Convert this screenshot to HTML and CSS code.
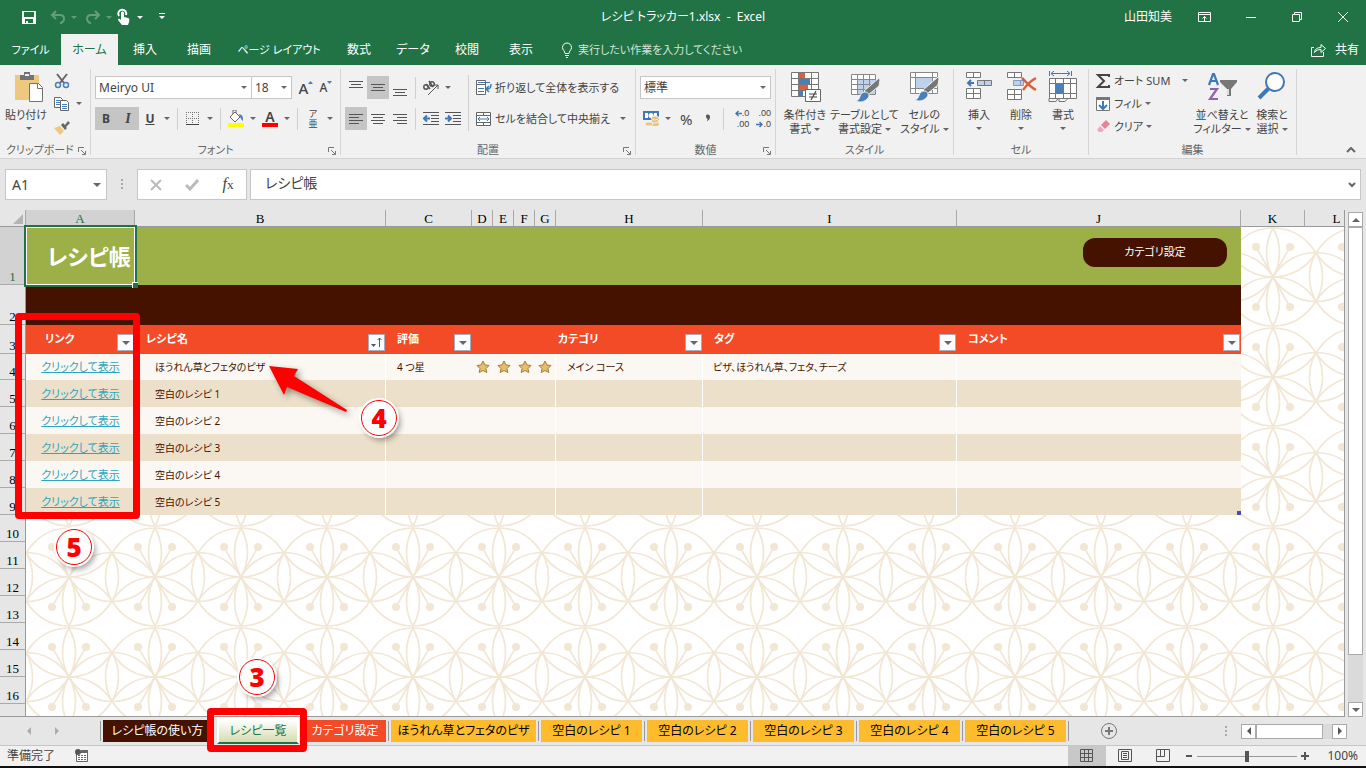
FILE: index.html
```html
<!DOCTYPE html>
<html lang="ja">
<head>
  <meta charset="UTF-8">
  <title>レシピ トラッカー1.xlsx - Excel</title>
  <meta name="viewport" content="width=device-width, initial-scale=1.0">
  <link rel="stylesheet" href="styles.css">
</head>
<body>

  <!-- Title bar -->
  <header class="titlebar">
    <div class="quick">
      <button class="qbtn" aria-label="上書き保存"><svg width="16" height="16" viewBox="0 0 16 16"><path fill="#fff" fill-rule="evenodd" d="M1 2h14v13H1zM3 3v5h10V3zM4 10v4h1v-2h2v2h5v-4z"/></svg></button>
      <button class="qbtn dim" aria-label="元に戻す"><svg width="16" height="16" viewBox="0 0 16 16" fill="none" stroke="#fff" stroke-width="2"><path d="M6 2 2 6l4 4M2 6h8c3 0 4 2 4 4s-2 4-4 4"/></svg><i class="caret"></i></button>
      <button class="qbtn dim" aria-label="やり直し"><svg width="16" height="16" viewBox="0 0 16 16" fill="none" stroke="#fff" stroke-width="2"><path d="m10 2 4 4-4 4M14 6H6C3 6 2 8 2 10s2 4 4 4"/></svg><i class="caret"></i></button>
      <button class="qbtn touch" aria-label="タッチ/マウス モードの切り替え"><svg width="16" height="18" viewBox="0 0 16 18"><path fill="none" stroke="#fff" stroke-width="2" d="M3 8A4 4 0 1 1 10 7"/><path fill="#fff" d="M5 5c0-2 3-2 3 0v4l4 1c1 0 2 1 1 4l-1 3H6L2 12c0-2 2-1 3 0z"/></svg><i class="caret"></i></button>
      <button class="qbtn" aria-label="クイック アクセス ツール バーのカスタマイズ"><svg width="8" height="8" viewBox="0 0 8 8" fill="#fff"><path d="M1 0h6v1H1zM1 3h6L4 6z"/></svg></button>
    </div>
    <div class="doc-title">レシピ トラッカー1.xlsx&nbsp; -&nbsp; Excel</div>
    <div class="window">
      <span class="user">山田知美</span>
      <button aria-label="リボンの表示オプション"><svg width="14" height="12" viewBox="0 0 14 12" fill="none" stroke="#fff"><path d="M.5 1.500h12v9H.5zM.5 3.500h12M6.500 10V5.500M4.500 7.500l2-2 2 2"/></svg></button>
      <button aria-label="最小化"><svg width="12" height="12" viewBox="0 0 12 12" stroke="#fff"><path d="M1 6.500h10"/></svg></button>
      <button aria-label="元に戻す (縮小)"><svg width="12" height="12" viewBox="0 0 12 12" fill="none" stroke="#fff"><path d="M1.500 3.500h7v7h-7zM3.500 3.500v-2h7v7h-2"/></svg></button>
      <button aria-label="閉じる"><svg width="12" height="12" viewBox="0 0 12 12" stroke="#fff"><path d="m1 1 10 10M11 1 1 11"/></svg></button>
    </div>
  </header>

  <!-- Ribbon tabs -->
  <nav class="tabs">
    <button class="tab tab-file">ファイル</button>
    <button class="tab tab-home active">ホーム</button>
    <button class="tab">挿入</button>
    <button class="tab">描画</button>
    <button class="tab tab-wide">ページ レイアウト</button>
    <button class="tab">数式</button>
    <button class="tab">データ</button>
    <button class="tab">校閲</button>
    <button class="tab">表示</button>
    <label class="tell-me">
      <svg width="12" height="16" viewBox="0 0 12 16" fill="none" stroke="#fff"><path d="M4 11.500C4 9 1.500 8 1.500 5.500a4.500 4.500 0 0 1 9 0C10.500 8 8 9 8 11.500zM4 13.500h4M5 15.500h2"/></svg>
      <input type="text" aria-label="操作アシスト" placeholder="実行したい作業を入力してください">
    </label>
    <button class="share"><svg width="16" height="14" viewBox="0 0 16 14" fill="none" stroke="#fff"><path d="M3 4.500H.5v9h12V9M3.500 9.500C4 6 6 4.500 10 4.500V1.500l4.500 4-4.500 4v-3C7 6.500 5 7.500 3.500 9.500z"/></svg>共有</button>
  </nav>

  <!-- Ribbon -->
  <section class="ribbon">
    <div class="group g-clip">
      <div class="group-body">
        <button class="big">
          <svg width="30" height="32" viewBox="0 0 30 32"><path fill="#edc87e" d="M1 4h24v25H1z"/><path fill="#737373" d="M6 4h4V1h6v3h4v5H6z"/><path fill="#f1f1f1" d="M11 3h4v2h-4z"/><path fill="#fff" stroke="#737373" d="M15.500 12.500h9l4 4v14h-13z"/><path fill="none" stroke="#737373" d="M23.500 12.500v5h5"/></svg>
          <span>貼り付け</span><i class="caret"></i>
        </button>
        <div class="stack">
          <button class="tool" aria-label="切り取り"><svg width="16" height="16" viewBox="0 0 16 16" fill="none"><path stroke="#666" stroke-width="2" d="m3 1 7 9M13 1 6 10"/><circle cx="4" cy="12" r="2.500" stroke="#4a7fb8" stroke-width="1.500"/><circle cx="12" cy="12" r="2.500" stroke="#4a7fb8" stroke-width="1.500"/></svg></button>
          <button class="tool" aria-label="コピー"><svg width="16" height="16" viewBox="0 0 16 16"><path fill="#fff" stroke="#666" d="M.5 1.500h6l2 2v8h-8z"/><path stroke="#4a7fb8" d="M2 4.500h4M2 6.500h4M2 8.500h4"/><path fill="#fff" stroke="#666" d="M6.500 4.500h6l2 2v8h-8z"/><path stroke="#4a7fb8" d="M8 8.500h5M8 10.500h5M8 12.500h5"/></svg><i class="caret"></i></button>
          <button class="tool" aria-label="書式のコピー/貼り付け"><svg width="16" height="16" viewBox="0 0 16 16"><path fill="#edc87e" d="m0 9 6-2 4 5-4 4z"/><path fill="#666" d="m7 6 2-2 2 2 3-4 2 2-4 4 1 1-2 2z"/></svg></button>
        </div>
      </div>
      <div class="group-name">クリップボード<svg class="launch" width="8" height="8" viewBox="0 0 8 8"><path fill="none" stroke="#777" d="M.5 5V.5H6M3 3l4 4M7.500 4v3.500H4"/></svg></div>
    </div>

    <div class="group g-font">
      <div class="group-body rows">
        <div class="row">
          <span class="combo combo-font"><select aria-label="フォント"><option>Meiryo UI</option></select><i class="caret"></i></span>
          <span class="combo combo-size"><select aria-label="フォント サイズ"><option>18</option></select><i class="caret"></i></span>
          <button class="tool grow" aria-label="フォント サイズの拡大">A<svg width="5" height="4" viewBox="0 0 5 4"><path fill="#4a7fb8" d="m0 3 2.500-3L5 3z"/></svg></button>
          <button class="tool grow shrink" aria-label="フォント サイズの縮小">A<svg width="5" height="4" viewBox="0 0 5 4"><path fill="#4a7fb8" d="m0 0 2.500 3L5 0z"/></svg></button>
        </div>
        <div class="row">
          <button class="tool on bold">B</button>
          <button class="tool on italic">I</button>
          <button class="tool underline">U</button>
          <button class="drop" aria-label="下線の種類"><i class="caret"></i></button>
          <span class="sep"></span>
          <button class="tool" aria-label="罫線"><svg width="14" height="14" viewBox="0 0 14 14" fill="none" stroke="#777"><path stroke-dasharray="1 1" d="M.5 0v12M6.500 0v12M12.500 0v12M0 .5h13M0 6.500h13"/><path stroke="#444" d="M0 12.500h13"/></svg></button>
          <button class="drop" aria-label="罫線の種類"><i class="caret"></i></button>
          <span class="sep"></span>
          <button class="tool" aria-label="塗りつぶしの色"><svg width="18" height="17" viewBox="0 0 18 17"><path fill="#fff" stroke="#666" d="m3 7 5-5 5 5-5 5zM6 4V0h3v3"/><path fill="#4a7fb8" d="M12 4c4 1 4 3 4 7-2-1-2-3-3-4z"/><path fill="#ff0" d="M1 13h16v4H1z"/></svg></button>
          <button class="drop" aria-label="塗りつぶしの色の選択"><i class="caret"></i></button>
          <button class="tool color">A</button>
          <button class="drop" aria-label="フォントの色の選択"><i class="caret"></i></button>
          <span class="sep"></span>
          <button class="tool ruby"><span>ア</span><span>亜</span></button>
          <button class="drop" aria-label="ふりがなの設定"><i class="caret"></i></button>
        </div>
      </div>
      <div class="group-name">フォント<svg class="launch" width="8" height="8" viewBox="0 0 8 8"><path fill="none" stroke="#777" d="M.5 5V.5H6M3 3l4 4M7.500 4v3.500H4"/></svg></div>
    </div>

    <div class="group g-align">
      <div class="group-body">
        <div class="rows">
          <div class="row">
            <button class="tool" aria-label="上揃え"><svg width="14" height="16" viewBox="0 0 14 16" stroke="#555"><path d="M0 1.500h14M2 4.500h10M0 7.500h14"/></svg></button>
            <button class="tool on" aria-label="上下中央揃え"><svg width="14" height="16" viewBox="0 0 14 16" stroke="#555"><path d="M0 4.500h14M2 7.500h10M0 10.500h14"/></svg></button>
            <button class="tool" aria-label="下揃え"><svg width="14" height="16" viewBox="0 0 14 16" stroke="#555"><path d="M0 9.500h14M2 12.500h10M0 15.500h14"/></svg></button>
            <span class="sep"></span>
            <button class="tool" aria-label="方向"><svg width="18" height="16" viewBox="0 0 18 16" fill="none" stroke="#555"><circle cx="4" cy="7" r="2.200" stroke-width="1.500"/><path stroke-width="1.500" d="m4 4 4 5M7 1l4 6"/><circle cx="10" cy="4" r="2.200" stroke-width="1.500"/><path d="m6 15 10-10M12 5h4v4"/></svg></button>
            <button class="drop" aria-label="方向の選択"><i class="caret"></i></button>
          </div>
          <div class="row">
            <button class="tool on" aria-label="左揃え"><svg width="14" height="14" viewBox="0 0 14 14" stroke="#555"><path d="M0 2.500h14M0 5.500h10M0 8.500h14M0 11.500h10"/></svg></button>
            <button class="tool" aria-label="中央揃え"><svg width="14" height="14" viewBox="0 0 14 14" stroke="#555"><path d="M0 2.500h14M2 5.500h10M0 8.500h14M2 11.500h10"/></svg></button>
            <button class="tool" aria-label="右揃え"><svg width="14" height="14" viewBox="0 0 14 14" stroke="#555"><path d="M0 2.500h14M4 5.500h10M0 8.500h14M4 11.500h10"/></svg></button>
            <span class="sep"></span>
            <button class="tool" aria-label="インデントを減らす"><svg width="16" height="14" viewBox="0 0 16 14" stroke="#555"><path d="M0 .5h16M8 3.500h8M8 6.500h8M8 9.500h8M0 12.500h16"/><path fill="none" stroke="#3f78b5" stroke-width="2" d="M7 6.500H1M4 3.500l-3 3 3 3"/></svg></button>
            <button class="tool" aria-label="インデントを増やす"><svg width="16" height="14" viewBox="0 0 16 14" stroke="#555"><path d="M0 .5h16M8 3.500h8M8 6.500h8M8 9.500h8M0 12.500h16"/><path fill="none" stroke="#3f78b5" stroke-width="2" d="M0 6.500h6M3 3.500l3 3-3 3"/></svg></button>
          </div>
        </div>
        <span class="sep tall"></span>
        <div class="rows">
          <button class="wide"><svg width="16" height="16" viewBox="0 0 16 16" fill="none"><path fill="#fff" stroke="#666" d="M.5.500h9v4h-9zM.5 4.500h9v10h-9z"/><path stroke="#3f78b5" d="M2 2.500h12M2 8.500h6M2 11.500h6"/><path stroke="#3f78b5" stroke-width="1.500" d="M15 4c0 4-1 5-4 5M13 6l-3 3 3 3"/></svg>折り返して全体を表示する</button>
          <button class="wide"><svg width="16" height="16" viewBox="0 0 16 16" fill="none"><path fill="#fff" stroke="#666" d="M.5 1.500h14v13H.5zM.5 4.500h14M.5 11.500h14M7.500 1.500v3M7.500 11.500v3"/><path stroke="#3f78b5" d="M2 8h11M4 6 2 8l2 2M11 6l2 2-2 2"/></svg>セルを結合して中央揃え<i class="caret"></i></button>
        </div>
      </div>
      <div class="group-name">配置<svg class="launch" width="8" height="8" viewBox="0 0 8 8"><path fill="none" stroke="#777" d="M.5 5V.5H6M3 3l4 4M7.500 4v3.500H4"/></svg></div>
    </div>

    <div class="group g-num">
      <div class="group-body rows">
        <div class="row">
          <span class="combo combo-num"><select aria-label="数値の書式"><option>標準</option></select><i class="caret"></i></span>
        </div>
        <div class="row">
          <button class="tool" aria-label="通貨表示形式"><svg width="18" height="17" viewBox="0 0 18 17"><path fill="#3f78b5" d="M1 1h16v9H1z"/><path fill="#fff" d="M3 3h3v5H3zM12 3h3v3h-3z"/><circle cx="9" cy="5.500" r="2.500" fill="#fff"/><ellipse cx="13" cy="14" rx="4" ry="2" fill="#edc072"/><ellipse cx="13" cy="11" rx="4" ry="2" fill="#edc072" stroke="#f1f1f1"/><ellipse cx="13" cy="8" rx="4" ry="2" fill="#edc072" stroke="#f1f1f1"/><ellipse cx="7" cy="14" rx="4" ry="2" fill="#edc072" stroke="#f1f1f1"/></svg></button>
          <button class="drop" aria-label="通貨の選択"><i class="caret"></i></button>
          <button class="tool percent">%</button>
          <button class="tool" aria-label="桁区切りスタイル"><svg width="6" height="14" viewBox="0 0 6 14"><path fill="#555" d="M1 4c0-2 4-2 4 1 0 2-1 3-3 4V8l1-1C2 7 1 6 1 4z"/></svg></button>
          <span class="sep"></span>
          <button class="tool dec"><span><svg width="7" height="7" viewBox="0 0 7 7" fill="none" stroke="#3f78b5" stroke-width="1.500"><path d="M7 3.500H1M3.500 1 1 3.500 3.500 6"/></svg>.0</span><span>.00</span></button>
          <button class="tool dec"><span>.00</span><span><svg width="7" height="7" viewBox="0 0 7 7" fill="none" stroke="#3f78b5" stroke-width="1.500"><path d="M0 3.500h6M3.500 1 6 3.500 3.500 6"/></svg>.0</span></button>
        </div>
      </div>
      <div class="group-name">数値<svg class="launch" width="8" height="8" viewBox="0 0 8 8"><path fill="none" stroke="#777" d="M.5 5V.5H6M3 3l4 4M7.500 4v3.500H4"/></svg></div>
    </div>

    <div class="group g-style">
      <div class="group-body">
        <button class="big">
          <svg width="32" height="32" viewBox="0 0 32 32"><path fill="#fff" stroke="#777" d="M2.500 1.500h27v24h-27zM9.500 1.500v24M22.500 1.500v24M2.500 7.500h27M2.500 13.500h27M2.500 19.500h27"/><path fill="#db5f43" d="M10 2h6v5h-6zM10 14h9v5h-9z"/><path fill="#4a80ba" d="M10 8h11v5H10zM10 20h4v5h-4z"/><path fill="#fff" stroke="#666" d="M16.500 18.500h15v12h-15z"/><path stroke="#444" stroke-width="1.200" d="M20 23h8M20 26h8M27 20l-5 9"/></svg>
          <span>条件付き</span><span>書式<i class="caret"></i></span>
        </button>
        <button class="big mid">
          <svg width="32" height="32" viewBox="0 0 32 32"><path fill="#fff" d="M2 3h25v20H2z"/><path fill="#bdd2ea" d="M8 8h19v15H8z"/><path fill="none" stroke="#888" d="M2.500 3.500h24v20h-24zM8.500 3.500v20M14.500 3.500v20M20.500 3.500v20M2.500 8.500h24M2.500 13.500h24M2.500 18.500h24"/><path fill="#777" stroke="#f1f1f1" d="m15 20 15-13 1 2-1 6-11 9z"/><path fill="#4a80ba" stroke="#f1f1f1" d="M7 30c5-1 3-9 9-9 4 0 5 4 3 6-3 4-8 5-12 3z"/></svg>
          <span>テーブルとして</span><span>書式設定<i class="caret"></i></span>
        </button>
        <button class="big">
          <svg width="32" height="32" viewBox="0 0 32 32"><path fill="#fff" stroke="#888" d="M2.500 1.500h27v21h-27zM7.500 1.500v21M24.500 1.500v21M2.500 6.500h27M2.500 17.500h27"/><path fill="#bdd2ea" d="M8 7h16v10H8z"/><path fill="#777" stroke="#f1f1f1" d="m15 19 15-13 1 2-1 6-11 9z"/><path fill="#4a80ba" stroke="#f1f1f1" d="M7 29c5-1 3-9 9-9 4 0 5 4 3 6-3 4-8 5-12 3z"/></svg>
          <span>セルの</span><span>スタイル<i class="caret"></i></span>
        </button>
      </div>
      <div class="group-name">スタイル</div>
    </div>

    <div class="group g-cell">
      <div class="group-body">
        <button class="big">
          <svg width="32" height="32" viewBox="0 0 32 32"><path fill="#fff" stroke="#777" d="M3.500 1.500h14v5h-14zM10.500 1.500v5M3.500 17.500h14v10h-14zM10.500 17.500v10M3.500 22.500h14"/><path fill="#bdd2ea" stroke="#777" d="M14.500 9.500h14v5h-14zM21.500 9.500v5"/><path fill="none" stroke="#3f78b5" stroke-width="2" d="M11 12H5M8 9l-3 3 3 3"/></svg>
          <span>挿入</span><i class="caret"></i>
        </button>
        <button class="big">
          <svg width="32" height="32" viewBox="0 0 32 32"><path fill="#fff" stroke="#777" d="M2.500 1.500h14v5h-14zM9.500 1.500v5M2.500 18.500h14v10h-14zM9.500 18.500v10M2.500 23.500h14"/><path fill="#bdd2ea" stroke="#7a9cc6" d="M8.500 9.500h10v5h-10zM15.500 9.500v5"/><path fill="none" stroke="#db5f3a" stroke-width="2.500" d="M17 7c4 4 8 9 14 12M31 7c-6 3-10 8-13 12"/></svg>
          <span>削除</span><i class="caret"></i>
        </button>
        <button class="big">
          <svg width="32" height="32" viewBox="0 0 32 32"><path fill="#fff" stroke="#777" d="M2.500 7.500h27v20h-27zM8.500 7.500v20M23.500 7.500v20M2.500 12.500h27M2.500 22.500h27M16.500 7.500v5M16.500 22.500v5"/><path fill="#4a80ba" d="M9 13h8v9H9z"/><path fill="#f1f1f1" stroke="#777" d="M2 27.500h9l-2 3H2zM12 27.500h9l-3 3h-6z"/><path fill="none" stroke="#3f78b5" d="M2.500 0v5M24.500 0v5M4 2.500h19M7 0 4 2.500 7 5M20 0l3 2.500L20 5"/></svg>
          <span>書式</span><i class="caret"></i>
        </button>
      </div>
      <div class="group-name">セル</div>
    </div>

    <div class="group g-edit">
      <div class="group-body">
        <div class="stack edit-list">
          <button class="wide"><svg width="16" height="16" viewBox="0 0 16 16"><path fill="none" stroke="#444" stroke-width="2" d="M14 4V2H3l6 6-6 6h11v-2"/></svg>オート SUM<i class="caret"></i></button>
          <button class="wide"><svg width="16" height="16" viewBox="0 0 16 16"><path fill="#fff" stroke="#777" d="M1.500 1.500h13v13h-13z"/><path fill="#777" d="M1 1h14v3H1z"/><path fill="none" stroke="#3f78b5" stroke-width="2" d="M8 5v7M4 9l4 4 4-4"/></svg>フィル<i class="caret"></i></button>
          <button class="wide"><svg width="16" height="16" viewBox="0 0 16 16"><path fill="#e8849a" d="m6 6 5-5 4 4-5 5z"/><path fill="#f0a9b8" d="m5 7 4 4-2 2H4l-2-2z"/></svg>クリア<i class="caret"></i></button>
        </div>
        <button class="big sort">
          <svg width="32" height="32" viewBox="0 0 32 32"><path fill="none" stroke="#3f78b5" stroke-width="2.200" d="m3 14 4-11h1l4 11M4 10h7"/><path fill="none" stroke="#8f63b4" stroke-width="2.200" d="M4 18h7l-7 10h8"/><path fill="#777" d="M14 9h17v2l-6 7v7h-4v-7l-7-7z"/><path fill="#ddd" d="M21 18h2v6h-2z"/></svg>
          <span>並べ替えと</span><span>フィルター<i class="caret"></i></span>
        </button>
        <button class="big find">
          <svg width="32" height="32" viewBox="0 0 32 32"><circle cx="19" cy="11" r="9" fill="#fff" stroke="#3f78b5" stroke-width="2"/><path stroke="#3f78b5" stroke-width="4" d="M13 17 3 27"/></svg>
          <span>検索と</span><span>選択<i class="caret"></i></span>
        </button>
      </div>
      <div class="group-name">編集</div>
    </div>
    <button class="collapse" aria-label="リボンを折りたたむ"><svg width="10" height="6" viewBox="0 0 10 6" fill="none" stroke="#666" stroke-width="2"><path d="m1 5 4-4 4 4"/></svg></button>
  </section>

  <!-- Formula bar -->
  <section class="formula-bar">
    <div class="name-box"><input type="text" aria-label="名前ボックス" value="A1"><i class="caret big-caret"></i></div>
    <span class="dots"></span>
    <div class="fx-box">
      <button aria-label="キャンセル"><svg width="12" height="12" viewBox="0 0 12 12" stroke="#bbb" stroke-width="2"><path d="m1 1 10 10M11 1 1 11"/></svg></button>
      <button aria-label="入力"><svg width="14" height="12" viewBox="0 0 14 12" fill="none" stroke="#bbb" stroke-width="3"><path d="m1 6 4 4 8-9"/></svg></button>
      <button class="fx"><i>f</i><small>x</small></button>
    </div>
    <div class="formula"><input type="text" aria-label="数式バー" value="レシピ帳"><svg width="8" height="6" viewBox="0 0 8 6" fill="none" stroke="#666" stroke-width="2"><path d="m1 1 3 3 3-3"/></svg></div>
  </section>

  <!-- Worksheet -->
  <main class="workspace">
    <div class="sheet">
      <svg class="pattern" aria-hidden="true">
        <defs>
          <pattern id="flower" width="86" height="100" patternUnits="userSpaceOnUse">
            <g fill="none" stroke="#f2e6d4" stroke-width="1.700">
              <circle cx="43" cy="50" r="49"/>
              <path d="M43 50A49.500 49.500 0 0 1 43 1A49.500 49.500 0 0 1 43 50M43 50A49.500 49.500 0 0 1 43 99A49.500 49.500 0 0 1 43 50"/>
              <path d="M43 50A49.500 49.500 0 0 1 86 25.500A49.500 49.500 0 0 1 43 50M43 50A49.500 49.500 0 0 1 86 74.500A49.500 49.500 0 0 1 43 50"/>
              <path d="M43 50A49.500 49.500 0 0 1 0 25.500A49.500 49.500 0 0 1 43 50M43 50A49.500 49.500 0 0 1 0 74.500A49.500 49.500 0 0 1 43 50"/>
              <path d="M0 25.500A49.500 49.500 0 0 1 0 74.500M86 25.500A49.500 49.500 0 0 0 86 74.500"/>
              <path d="M26 20l34 60M60 20L26 80"/>
            </g>
            <g fill="#f2e6d4">
              <circle cx="26" cy="20" r="4"/><circle cx="60" cy="20" r="4"/>
              <circle cx="26" cy="80" r="4"/><circle cx="60" cy="80" r="4"/>
            </g>
          </pattern>
        </defs>
        <rect width="100%" height="100%" fill="url(#flower)"/>
      </svg>

      <table class="grid">
        <colgroup>
          <col class="c-head"><col class="c-a"><col class="c-b"><col class="c-c">
          <col class="c-star"><col class="c-star"><col class="c-star"><col class="c-star">
          <col class="c-h"><col class="c-i"><col class="c-j"><col class="c-k"><col>
        </colgroup>
        <thead>
          <tr>
            <th class="corner"><svg width="10" height="10" viewBox="0 0 10 10"><path fill="#b4b4b4" d="M10 0v10H0z"/></svg></th>
            <th class="sel">A</th><th>B</th><th>C</th><th>D</th><th>E</th><th>F</th><th>G</th>
            <th>H</th><th>I</th><th>J</th><th>K</th><th class="last">L</th>
          </tr>
        </thead>
        <tbody>
          <tr class="r-title">
            <th class="sel">1</th>
            <td class="a1">レシピ帳<span class="handle"></span></td>
            <td colspan="9" class="banner"><button class="category-btn">カテゴリ設定</button></td>
            <td></td><td></td>
          </tr>
          <tr class="r-dark"><th>2</th><td colspan="10"></td><td></td><td></td></tr>
          <tr class="r-head">
            <th>3</th>
            <td><div class="head-cell indent">リンク<button class="filter" aria-label="リンクのフィルター"><i class="caret big-caret"></i></button></div></td>
            <td><div class="head-cell">レシピ名<button class="filter" aria-label="レシピ名の並べ替え"><svg width="13" height="11" viewBox="0 0 13 11"><path fill="#555" d="M1 7h5L3.500 10z"/><path fill="none" stroke="#555" d="M9.500 10V1M7.500 3l2-2 2 2"/></svg></button></div></td>
            <td><div class="head-cell">評価<button class="filter" aria-label="評価のフィルター"><i class="caret big-caret"></i></button></div></td>
            <td colspan="4"></td>
            <td><div class="head-cell flush">カテゴリ<button class="filter" aria-label="カテゴリのフィルター"><i class="caret big-caret"></i></button></div></td>
            <td><div class="head-cell">タグ<button class="filter" aria-label="タグのフィルター"><i class="caret big-caret"></i></button></div></td>
            <td><div class="head-cell">コメント<button class="filter" aria-label="コメントのフィルター"><i class="caret big-caret"></i></button></div></td>
            <td></td><td></td>
          </tr>
          <tr class="r-data first">
            <th>4</th>
            <td class="link"><a href="#">クリックして表示</a></td>
            <td class="name">ほうれん草とフェタのピザ</td>
            <td class="rate">4 つ星</td>
            <td class="star"><svg width="14" height="14" viewBox="0 0 14 14"><path fill="#e5bd6c" stroke="#a67c35" d="m7 1 2 4 4 .5-3 3 .8 4L7 10.500l-3.800 2 .8-4-3-3L5 5z"/></svg></td>
            <td class="star"><svg width="14" height="14" viewBox="0 0 14 14"><path fill="#e5bd6c" stroke="#a67c35" d="m7 1 2 4 4 .5-3 3 .8 4L7 10.500l-3.800 2 .8-4-3-3L5 5z"/></svg></td>
            <td class="star"><svg width="14" height="14" viewBox="0 0 14 14"><path fill="#e5bd6c" stroke="#a67c35" d="m7 1 2 4 4 .5-3 3 .8 4L7 10.500l-3.800 2 .8-4-3-3L5 5z"/></svg></td>
            <td class="star end"><svg width="14" height="14" viewBox="0 0 14 14"><path fill="#e5bd6c" stroke="#a67c35" d="m7 1 2 4 4 .5-3 3 .8 4L7 10.500l-3.800 2 .8-4-3-3L5 5z"/></svg></td>
            <td class="cat">メイン コース</td>
            <td class="tag">ピザ、ほうれん草、フェタ、チーズ</td>
            <td></td><td></td><td></td>
          </tr>
          <tr class="r-data alt"><th>5</th><td class="link"><a href="#">クリックして表示</a></td><td class="name">空白のレシピ 1</td><td></td><td colspan="4" class="end"></td><td class="cat"></td><td class="tag"></td><td></td><td></td><td></td></tr>
          <tr class="r-data"><th>6</th><td class="link"><a href="#">クリックして表示</a></td><td class="name">空白のレシピ 2</td><td></td><td colspan="4" class="end"></td><td class="cat"></td><td class="tag"></td><td></td><td></td><td></td></tr>
          <tr class="r-data alt"><th>7</th><td class="link"><a href="#">クリックして表示</a></td><td class="name">空白のレシピ 3</td><td></td><td colspan="4" class="end"></td><td class="cat"></td><td class="tag"></td><td></td><td></td><td></td></tr>
          <tr class="r-data"><th>8</th><td class="link"><a href="#">クリックして表示</a></td><td class="name">空白のレシピ 4</td><td></td><td colspan="4" class="end"></td><td class="cat"></td><td class="tag"></td><td></td><td></td><td></td></tr>
          <tr class="r-data alt"><th>9</th><td class="link"><a href="#">クリックして表示</a></td><td class="name">空白のレシピ 5</td><td></td><td colspan="4" class="end"></td><td class="cat"></td><td class="tag"></td><td><span class="table-end"></span></td><td></td><td></td></tr>
          <tr><th>10</th><td colspan="12"></td></tr>
          <tr><th>11</th><td colspan="12"></td></tr>
          <tr><th>12</th><td colspan="12"></td></tr>
          <tr><th>13</th><td colspan="12"></td></tr>
          <tr><th>14</th><td colspan="12"></td></tr>
          <tr><th>15</th><td colspan="12"></td></tr>
          <tr><th>16</th><td colspan="12"></td></tr>
          <tr><th></th><td colspan="12"></td></tr>
        </tbody>
      </table>
    </div>

    <div class="vscroll">
      <button aria-label="上へ"><i class="caret big-caret up"></i></button>
      <span class="thumb"></span>
      <span class="track"></span>
      <button aria-label="下へ"><i class="caret big-caret"></i></button>
    </div>

    <!-- Step markers -->
    <div class="frame frame-links"></div>
    <div class="mark mark-4">4</div>
    <div class="mark mark-5">5</div>
    <div class="mark mark-3">3</div>
    <svg class="arrow" width="86" height="56" viewBox="0 0 86 56"><path fill="#f00" d="m3 3 29 3-4 7 53 34-1 2-59-25-3 8z"/></svg>
  </main>

  <!-- Sheet tabs -->
  <section class="sheet-tabs">
    <div class="nav"><i class="side left"></i><i class="side right"></i></div>
    <button class="stab dark">レシピ帳の使い方</button>
    <button class="stab current">レシピ一覧<span class="frame frame-tab"></span></button>
    <button class="stab red">カテゴリ設定</button>
    <button class="stab gold long">ほうれん草とフェタのピザ</button>
    <button class="stab gold">空白のレシピ 1</button>
    <button class="stab gold">空白のレシピ 2</button>
    <button class="stab gold">空白のレシピ 3</button>
    <button class="stab gold">空白のレシピ 4</button>
    <button class="stab gold">空白のレシピ 5</button>
    <button class="add" aria-label="新しいシート"><svg width="16" height="16" viewBox="0 0 16 16" fill="none" stroke="#777"><circle cx="8" cy="8" r="7.500"/><path stroke-width="2" d="M8 4v8M4 8h8"/></svg></button>
    <div class="hscroll">
      <span class="dots"></span>
      <button aria-label="左へ"><i class="side left"></i></button>
      <span class="thumb"></span>
      <span class="track"></span>
      <button aria-label="右へ"><i class="side right"></i></button>
    </div>
  </section>

  <!-- Status bar -->
  <footer class="status">
    <span>準備完了</span>
    <svg class="macro" width="14" height="14" viewBox="0 0 14 14"><path fill="#fff" stroke="#666" d="M1.500 3.500h11v9h-11z"/><path fill="#666" d="M6 1h7v3H6z"/><circle cx="3" cy="3" r="3" fill="#555"/><path stroke="#666" stroke-dasharray="2 1" d="M3 6.500h9M3 8.500h9M3 10.500h9"/></svg>
    <div class="views">
      <button class="on" aria-label="標準"><svg width="14" height="14" viewBox="0 0 14 14" fill="none" stroke="#555"><path d="M.5.5h12v12H.5zM4.500.5v12M8.500.5v12M.5 4.500h12M.5 8.500h12"/></svg></button>
      <button aria-label="ページ レイアウト"><svg width="14" height="14" viewBox="0 0 14 14" fill="none" stroke="#555"><path d="M.5.5h13v12H.5zM3.500 2.500h7v8h-7zM5 4.500h4M5 6.500h4M5 8.500h4"/></svg></button>
      <button aria-label="改ページ プレビュー"><svg width="14" height="14" viewBox="0 0 14 14" fill="none" stroke="#555"><path d="M.5.5h13v12H.5zM4.500.5v7M8.500.5v7M.5 7.500h8"/></svg></button>
    </div>
    <button class="step" aria-label="縮小"><svg width="8" height="8" viewBox="0 0 8 8"><path fill="#555" d="M1 3h6v2H1z"/></svg></button>
    <input class="zoom" type="range" min="0" max="100" value="50" aria-label="ズーム">
    <button class="step" aria-label="拡大"><svg width="8" height="8" viewBox="0 0 8 8"><path fill="#555" d="M0 3h8v2H0zM3 0h2v8H3z"/></svg></button>
    <span class="percent-text">100%</span>
  </footer>

</body>
</html>
```
FILE: styles.css
```css
:root {
  --green: #217346;
  --ribbon: #f1f1f1;
  --chrome: #e6e6e6;
  --line: #c6c6c6;
  --text: #444;
  --brown: #461200;
  --orange: #f34a27;
}
* {
  box-sizing: border-box;
}
body {
  margin: 0;
  height: 100vh;
  display: flex;
  flex-direction: column;
  background: var(--chrome);
  color: var(--text);
  font-family: "Noto Sans", "Noto Sans CJK JP", sans-serif;
  font-size: 12px;
  line-height: 14px;
  font-feature-settings: "palt";
  border-bottom: 2px solid #111;
  overflow: hidden;
}
button, input, select {
  font: inherit;
  font-feature-settings: inherit;
  color: inherit;
  border: none;
  background: none;
  padding: 0;
  margin: 0;
  border-radius: 0;
  outline: none;
}
button {
  display: flex;
  align-items: center;
  justify-content: center;
  white-space: nowrap;
}
svg {
  flex: none;
}
.caret {
  display: inline-block;
  flex: none;
  border: 3px solid transparent;
  border-top-color: #666;
  border-bottom: none;
}
.big-caret {
  border-width: 4px;
  border-bottom: none;
}
.caret.up {
  border-top: none;
  border-bottom: 4px solid #666;
}

/* title bar */
.titlebar {
  height: 34px;
  flex: none;
  display: grid;
  grid-template-columns: 1fr auto 1fr;
  align-items: center;
  background: var(--green);
  color: #fff;
}
.titlebar .caret {
  border-top-color: #fff;
}
.quick {
  display: flex;
  align-items: center;
  padding-left: 21px;
}
.qbtn {
  gap: 5px;
  margin-right: 8px;
}
.qbtn:first-child {
  margin-right: 13px;
}
.qbtn.dim + .touch {
  margin-left: -4px;
}
.qbtn.touch {
  margin-right: 15px;
}
.dim {
  opacity: 0.3;
}
.window {
  display: flex;
  justify-content: flex-end;
  align-items: center;
}
.window button {
  width: 46px;
}
.user {
  margin-right: 10px;
}

/* tabs */
.tabs {
  display: flex;
  height: 31px;
  flex: none;
  background: var(--green);
  color: #fff;
}
.tab {
  width: 54px;
}
.tab-file {
  width: 61px;
  font-size: 11px;
}
.tab-home {
  width: 57px;
}
.tab-wide {
  width: 106px;
  font-size: 11px;
}
.tab.active {
  background: var(--ribbon);
  color: var(--green);
}
.tell-me {
  display: flex;
  align-items: center;
  gap: 5px;
  margin-left: 13px;
  font-size: 11px;
}
.tell-me input {
  width: 200px;
}
.tell-me input::placeholder {
  color: #d3e3da;
  opacity: 1;
}
.share {
  margin-left: auto;
  padding-right: 7px;
  gap: 8px;
}

/* ribbon */
.ribbon {
  display: flex;
  height: 94px;
  flex: none;
  padding: 4px 0 3px;
  background: var(--ribbon);
  border-bottom: 1px solid #d2d2d2;
}
.group {
  display: flex;
  flex-direction: column;
  justify-content: space-between;
  flex: none;
  border-right: 1px solid #d5d5d5;
}
.g-clip { width: 91px; }
.g-font { width: 250px; }
.g-align { width: 295px; }
.g-num { width: 140px; }
.g-style { width: 178px; }
.g-cell { width: 135px; }
.g-edit { width: 208px; }
.group-body {
  display: flex;
  padding: 0 4px;
}
.rows {
  display: flex;
  flex-direction: column;
  gap: 8px;
  padding-top: 7px;
}
.row {
  display: flex;
  align-items: center;
  height: 23px;
}
.group-name {
  display: flex;
  justify-content: center;
  position: relative;
  color: #666;
  font-size: 11px;
  line-height: 10px;
}
.launch {
  position: absolute;
  right: 4px;
  bottom: 0;
}
.g-clip .group-name {
  justify-content: flex-start;
  padding-left: 6px;
}
.big {
  flex-direction: column;
  justify-content: flex-start;
  width: 60px;
  padding-top: 2px;
  font-size: 11px;
}
.big svg {
  margin-bottom: 5px;
}
.big > .caret {
  margin-top: 5px;
}
.big span .caret {
  margin: 0 0 2px 3px;
}
.g-clip .big {
  width: 46px;
}
.g-clip .group-body {
  padding: 0;
}
.g-clip .big svg {
  margin-left: 11px;
}
.g-clip .big span {
  padding-left: 6px;
}
.g-clip .big .caret {
  margin-left: 12px;
}
.stack {
  display: flex;
  flex-direction: column;
  margin-left: 4px;
}
.stack .tool {
  width: 32px;
  justify-content: flex-start;
  gap: 6px;
  margin-left: 4px;
}
.combo {
  position: relative;
  flex: none;
  height: 23px;
  border: 1px solid var(--line);
  background: #fff;
}
.combo select {
  appearance: none;
  width: 100%;
  height: 21px;
  padding-left: 3px;
}
.combo .caret {
  position: absolute;
  right: 4px;
  top: 9px;
}
.combo-font { width: 157px; }
.combo-size { width: 41px; margin-left: -1px; }
.combo-num { width: 131px; }
.tool {
  width: 22px;
  height: 23px;
}
.tool.on {
  background: #c5c5c5;
}
.drop {
  width: 12px;
  height: 23px;
}
.sep {
  width: 1px;
  height: 22px;
  margin: 0 4px;
  background: #d0d0d0;
}
.sep.tall {
  height: 56px;
  margin: 6px 7px 0 4px;
}
.grow {
  font-size: 15px;
  font-weight: 500;
  margin-left: 4px;
}
.grow svg {
  margin-bottom: 10px;
}
.shrink {
  font-size: 12px;
  margin-left: 0;
}
.bold, .italic, .underline {
  font-weight: 700;
}
.italic {
  font-family: "Liberation Serif", serif;
  font-size: 14px;
  font-style: italic;
}
.underline {
  text-decoration: underline;
}
.color {
  flex-direction: column;
  font-size: 14px;
  font-weight: 600;
  line-height: 12px;
}
.color::after {
  content: '';
  width: 16px;
  height: 4px;
  background: #f00;
}
.ruby {
  flex-direction: column;
  font-family: "Liberation Sans", "Noto Sans CJK JP", sans-serif;
  font-size: 9px;
  line-height: 10px;
}
.wide {
  height: 23px;
  gap: 3px;
  font-size: 11px;
}
.rows .wide {
  justify-content: flex-start;
  width: 150px;
}
.rows .wide .caret {
  margin-left: auto;
}
.percent {
  font-size: 15px;
  margin-left: 2px;
}
.dec {
  flex-direction: column;
  align-items: flex-end;
  font-family: "Liberation Sans", sans-serif;
  font-size: 9px;
  line-height: 11px;
}
.dec span {
  display: flex;
  align-items: center;
}
.g-style .big {
  width: 58px;
}
.g-style .group-body {
  padding: 0;
}
.g-style .mid {
  width: 62px;
}
.g-cell .big {
  width: 42px;
}
.edit-list {
  align-items: flex-start;
  margin-left: 2px;
  width: 100px;
}
.edit-list .wide:first-child .caret {
  margin-left: 9px;
}
.sort {
  width: 54px;
}
.find {
  width: 46px;
}
.g-edit .group-body {
  padding-right: 0;
}
.collapse {
  margin: auto 10px 2px auto;
}

/* formula bar */
.formula-bar {
  display: flex;
  align-items: center;
  flex: none;
  padding: 10px 5px 10px;
}
.name-box, .fx-box, .formula {
  display: flex;
  align-items: center;
  height: 31px;
  border: 1px solid var(--line);
  background: #fff;
}
.name-box {
  width: 102px;
  padding: 0 5px 0 6px;
}
.name-box input {
  width: 100%;
  font-size: 14px;
}
.dots {
  width: 2px;
  height: 11px;
  margin: 0 14px;
  background: repeating-linear-gradient(#aaa 0 2px, transparent 2px 4px);
}
.fx-box {
  width: 110px;
}
.fx-box button {
  width: 36px;
}
.fx {
  align-items: baseline;
  font-family: "Liberation Serif", serif;
  font-size: 16px;
}
.formula {
  flex: 1;
  align-items: flex-start;
  margin-left: 3px;
  padding: 2px 4px 0 14px;
}
.formula svg {
  margin-top: 10px;
}
.formula input {
  flex: 1;
  font-size: 14px;
}

/* worksheet */
.workspace {
  position: relative;
  display: flex;
  flex: 1;
  min-height: 0;
}
.sheet {
  position: relative;
  flex: 1;
  min-width: 0;
  overflow: hidden;
  border-right: 1px solid #999;
  border-bottom: 1px solid #999;
}
.pattern {
  position: absolute;
  left: 26px;
  top: 17px;
  width: calc(100% - 26px);
  height: calc(100% - 17px);
  background: #fff;
}
.grid {
  position: relative;
  width: 100%;
  table-layout: fixed;
  border-collapse: separate;
  border-spacing: 0;
}
.c-head { width: 26px; }
.c-a { width: 109px; }
.c-b { width: 251px; }
.c-c { width: 86px; }
.c-star { width: 21px; }
.c-h { width: 147px; }
.c-i { width: 254px; }
.c-j { width: 284px; }
.c-k { width: 64px; }
.grid tr {
  height: 27px;
}
.grid td {
  padding: 0;
  white-space: nowrap;
}
.grid th {
  padding: 0;
  background: var(--chrome);
  color: #000;
  font-family: "Liberation Serif", serif;
  font-size: 13px;
  font-weight: 400;
  line-height: 14px;
}
.grid thead tr {
  height: 17px;
}
.grid thead th {
  border-right: 1px solid #aaa;
  border-bottom: 1px solid #999;
  padding-top: 2px;
}
.grid thead th.last {
  padding-left: 24px;
  border-right: none;
}
.grid .corner svg {
  display: block;
  margin-left: 13px;
}
.grid tbody th {
  vertical-align: bottom;
  border-right: 1px solid #999;
  border-bottom: 1px solid #aaa;
}
.grid th.sel {
  background: #d2d2d2;
  color: var(--green);
}
.grid .r-title { height: 58px; }
.grid .r-dark { height: 40px; }
.grid .r-head { height: 29px; }
.grid .first { height: 26px; }
.grid .a1 {
  position: relative;
  padding-left: 21px;
  background: #9db048;
  box-shadow: inset 0 0 0 1px #fff, 0 0 0 2px var(--green);
  color: #fff;
  font-size: 22px;
  font-weight: 700;
}
.handle {
  position: absolute;
  right: -3px;
  bottom: -3px;
  width: 6px;
  height: 6px;
  background: var(--green);
  border: 1px solid #fff;
  border-right: none;
  border-bottom: none;
}
.grid .banner {
  padding: 0 14px 8px 0;
  background: #9db048;
}
.category-btn {
  width: 144px;
  height: 29px;
  margin-left: auto;
  border-radius: 12px;
  background: var(--brown);
  color: #fff;
  font-size: 11px;
}
.r-dark td:nth-child(2) {
  background: var(--brown);
}
.r-head td:nth-child(-n+8) {
  background: var(--orange);
}
.head-cell {
  display: flex;
  justify-content: space-between;
  height: 29px;
  padding: 7px 1px 0 11px;
  color: #fff;
  font-size: 11px;
  font-weight: 700;
}
.head-cell.indent {
  padding-left: 19px;
}
.head-cell.flush {
  padding-left: 2px;
}
.filter {
  width: 17px;
  height: 17px;
  margin-top: 2px;
  border: 1px solid #aab;
  background: #fafbff;
}
.r-data td {
  background: #fbf8f3;
  color: var(--brown);
  font-size: 10px;
}
.r-data.alt td {
  background: #ede0ca;
}
.r-data td:nth-last-child(-n+2),
.r-data.alt td:nth-last-child(-n+2) {
  background: none;
}
.r-data .link {
  text-align: center;
}
.link a {
  color: #2fa5bf;
  font-size: 11px;
}
.grid .name, .grid .end, .grid .cat, .grid .tag {
  border-right: 1px solid #fff;
}
.grid .name {
  padding-left: 20px;
}
.grid .rate, .grid .cat {
  padding-left: 11px;
}
.grid .tag {
  padding-left: 10px;
}
.star svg {
  display: block;
  margin: 0 auto;
}
.r-data td:has(.table-end) {
  vertical-align: bottom;
}
.table-end {
  display: block;
  width: 4px;
  height: 4px;
  margin-left: auto;
  background: #3f51b5;
}

/* scroll bars */
.vscroll {
  display: flex;
  flex-direction: column;
  width: 15px;
  margin: 2px 3px 0 3px;
}
.vscroll button {
  height: 15px;
  border: 1px solid #aaa;
  background: #fff;
}
.thumb {
  border: 1px solid #aaa;
  background: #fff;
}
.track {
  background: #dadada;
}
.vscroll .thumb {
  flex: 9;
}
.vscroll .track {
  flex: 1;
}

/* step markers */
.frame {
  position: absolute;
  border: 7px solid #f00;
  border-radius: 4px;
}
.frame-links {
  left: 15px;
  top: 103px;
  width: 125px;
  height: 206px;
}
.frame-tab {
  left: -12px;
  right: -10px;
  top: -12px;
  bottom: -10px;
}
.mark {
  position: absolute;
  width: 36px;
  height: 36px;
  border: 1px solid #f00;
  border-radius: 50%;
  background: #fff;
  box-shadow: 0 0 0 2px #fff, 3px 4px 6px rgba(0,0,0,0.4);
  color: #f00;
  font-size: 26px;
  font-weight: 900;
  line-height: 34px;
  text-align: center;
}
.mark-3 { left: 239px; top: 449px; }
.mark-4 { left: 361px; top: 190px; }
.mark-5 { left: 56px; top: 319px; }
.arrow {
  position: absolute;
  left: 266px;
  top: 153px;
  filter: drop-shadow(3px 3px 3px rgba(0,0,0,0.4));
}

/* sheet tabs */
.sheet-tabs {
  display: flex;
  align-items: center;
  height: 29px;
  flex: none;
  border-bottom: 1px solid var(--line);
}
.nav {
  display: flex;
  justify-content: space-between;
  width: 101px;
  padding: 0 41px 0 27px;
  border-right: 1px solid #999;
  height: 20px;
  align-items: center;
}
.nav .side {
  opacity: 0.4;
}
.side {
  border: 4px solid transparent;
}
.side.left {
  border-left: none;
  border-right-color: #555;
}
.side.right {
  border-right: none;
  border-left-color: #555;
}
.stab {
  position: relative;
  height: 22px;
  margin: 0 3px 0 2px;
  width: 101px;
  color: #000;
}
.stab.dark {
  width: 109px;
  background: var(--brown);
  color: #fff;
}
.stab.red {
  width: 82px;
  background: var(--orange);
  color: #fff;
}
.stab.current {
  width: 82px;
  height: 26px;
  border: 2px solid #fff;
  border-bottom-color: var(--green);
  background: linear-gradient(#fff, #d5dcae);
  color: var(--green);
  z-index: 1;
}
.stab.gold {
  background: #ffbb2e;
}
.stab.long {
  width: 145px;
}
.stab.gold::after, .stab.red::after {
  content: '';
  position: absolute;
  right: -3px;
  top: 1px;
  width: 1px;
  height: 20px;
  background: #999;
}
.add {
  margin-left: 32px;
}
.hscroll {
  display: flex;
  align-items: center;
  margin-left: auto;
  margin-right: 19px;
}
.hscroll button {
  width: 15px;
  height: 15px;
  border: 1px solid #aaa;
  background: #fff;
}
.hscroll .thumb {
  width: 67px;
  height: 15px;
}
.hscroll .track {
  width: 9px;
  height: 15px;
}

/* status bar */
.status {
  display: flex;
  align-items: center;
  height: 20px;
  flex: none;
  padding: 0 8px 0 7px;
  background: var(--ribbon);
}
.macro {
  margin-left: 20px;
}
.views {
  display: flex;
  margin-left: auto;
  margin-right: 2px;
}
.views button {
  width: 38px;
  height: 20px;
}
.views .on {
  background: #c8c8c8;
}
.step {
  width: 10px;
}
.zoom {
  appearance: none;
  width: 100px;
  height: 12px;
  margin: 0 3px;
  background: linear-gradient(#999, #999) center / 100% 1px no-repeat;
}
.zoom::-webkit-slider-thumb {
  appearance: none;
  width: 4px;
  height: 11px;
  background: #555;
}
.percent-text {
  width: 48px;
  text-align: right;
}
```
